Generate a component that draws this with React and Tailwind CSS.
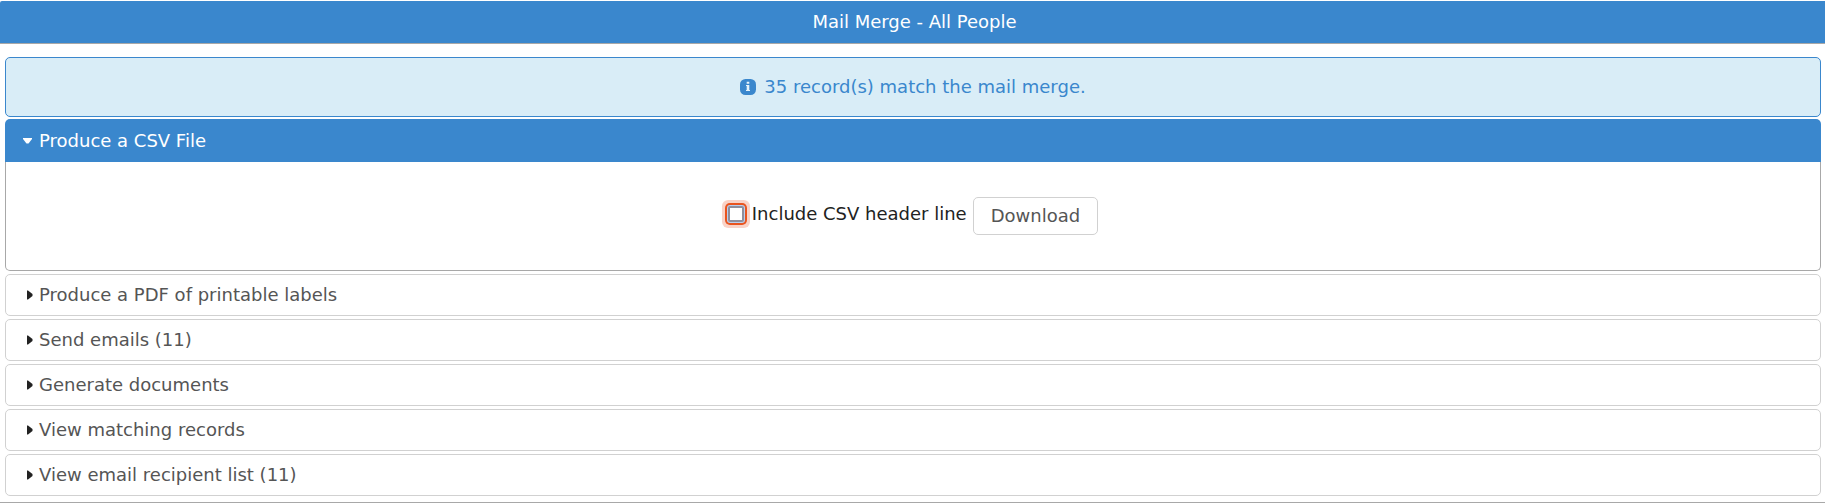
import { useState } from "react";

const sections = [
  "Produce a PDF of printable labels",
  "Send emails (11)",
  "Generate documents",
  "View matching records",
  "View email recipient list (11)",
];

function InfoIcon() {
  return (
    <svg viewBox="0 0 16 16" className="size-4 shrink-0" aria-hidden="true">
      <rect width="16" height="16" rx="5.5" fill="#3a87cd" />
      <path d="M6.7 2.8h2.6v2H6.7zM6 6h3.3v4.9h.7V12H6v-1.1h.7V7.1H6z" fill="#e6f3fa" />
    </svg>
  );
}

function SectionButton({ label }) {
  return (
    <button
      type="button"
      aria-expanded="false"
      className="flex h-[42px] w-full items-center gap-1.5 rounded-[5px] border border-[#d1d1d1] bg-white pl-[21px] text-left text-[#555]"
    >
      <svg viewBox="0 0 6 10" className="h-2.5 w-1.5" aria-hidden="true">
        <path d="M0 .5h1L5.5 4v2L1 9.500H0z" fill="#222" />
      </svg>
      {label}
    </button>
  );
}

export default function App() {
  const [header, setHeader] = useState(false);
  return (
    <main className="border-b border-[#a8a8a8] bg-white pt-px pb-1.5 font-['DejaVu_Sans',sans-serif] text-[18px] leading-[22px] text-[#222]">
      <h1 className="flex h-[43px] items-center justify-center rounded-tl-[2px] border-b border-[#a8a8a8] bg-[#3a87cd] pl-1 text-white">
        Mail Merge - All People
      </h1>
      <div className="pt-[13px] pr-1 pl-[5px]">
        <p className="flex h-[60px] items-center justify-center gap-2 rounded-[5px] border border-[#3a87cd] bg-[#d9edf7] text-[#3a87cd]">
          <InfoIcon />
          35 record(s) match the mail merge.
        </p>
        <section className="mt-0.5 mb-[3px]">
          <button
            type="button"
            aria-expanded="true"
            className="flex h-[43px] w-full items-center gap-[7px] rounded-t-[5px] bg-[#3a87cd] pl-[18px] text-left text-white"
          >
            <svg viewBox="0 0 9 6" className="h-1.5 w-[9px]" aria-hidden="true">
              <path d="M0 0h9v1L5.5 5.500h-2L0 1z" fill="#fff" />
            </svg>
            Produce a CSV File
          </button>
          <div className="flex justify-center gap-1.5 rounded-b-[5px] border border-t-0 border-[#a8a8a8] pt-[35px] pb-[35px]">
            <label className="flex h-[34px] items-center gap-2">
              <input
                type="checkbox"
                checked={header}
                onChange={(e) => setHeader(e.target.checked)}
                className="size-4 appearance-none rounded-[2px] border-2 border-[#8f8f9d] bg-white shadow-[0_0_0_1px_#b9cfee,0_0_0_3px_#e9541f,0_0_0_6px_#f9d3c8] checked:bg-[#3a87cd]"
              />
              Include CSV header line
            </label>
            <button
              type="button"
              className="h-[38px] rounded-[5px] border border-[#d1d1d1] bg-white px-[17px] text-[#555]"
            >
              Download
            </button>
          </div>
        </section>
        <div className="flex flex-col gap-[3px]">
          {sections.map((label) => (
            <SectionButton key={label} label={label} />
          ))}
        </div>
      </div>
    </main>
  );
}
